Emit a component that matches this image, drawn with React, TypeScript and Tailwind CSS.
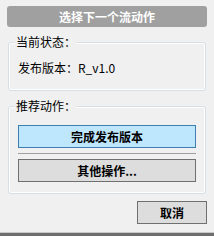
export default function App() {
  const font = { fontFamily: '"Noto Sans CJK SC", "Microsoft YaHei", sans-serif' };
  return (
    <div
      className="w-[214px] h-[236px] bg-[#f0f0f0] flex flex-col text-[12px] leading-[16px] text-black overflow-hidden"
      style={font}
    >
      <div className="mx-[7px] mt-[6px] h-[21px] rounded-[3px] bg-[#a0a0a0] text-white font-bold flex items-center justify-center">
        选择下一个流动作
      </div>

      {/* 当前状态 */}
      <div className="ml-[8px] mt-[15px] w-[198px] h-[49px] rounded-[3px] border border-[#d5dfe5] shadow-[inset_0_0_0_1px_#ffffff] flex flex-col">
        <span className="-mt-[9px] ml-[6px] px-[1px] w-fit bg-[#f0f0f0]">当前状态：</span>
        <span className="mt-[10px] ml-[9px]">发布版本：R_v1.0</span>
      </div>

      {/* 推荐动作 */}
      <div className="ml-[8px] mt-[15px] w-[198px] h-[88px] rounded-[3px] border border-[#d5dfe5] shadow-[inset_0_0_0_1px_#ffffff] flex flex-col">
        <span className="-mt-[9px] ml-[6px] px-[1px] w-fit bg-[#f0f0f0]">推荐动作：</span>
        <button className="mt-[11px] ml-[9px] w-[178px] h-[23px] border border-[#3c7fb1] bg-[#bee6fd] font-bold flex items-center justify-center">
          完成发布版本
        </button>
        <div className="mt-[5px] ml-[9px] w-[178px] h-px bg-[#a0a0a0]" />
        <button className="mt-[5px] ml-[9px] w-[178px] h-[23px] border border-[#707070] bg-[#dddddd] font-bold flex items-center justify-center">
          其他操作...
        </button>
      </div>

      <div className="flex justify-end mt-[7px] mr-[7px]">
        <button className="w-[70px] h-[23px] border border-[#707070] bg-[#dddddd] font-bold flex items-center justify-center">
          取消
        </button>
      </div>

      <div className="mt-auto h-[1px] bg-[#c8c8c8]" />
      <div className="h-[3px] bg-[#6e6e6e]" />
    </div>
  );
}
